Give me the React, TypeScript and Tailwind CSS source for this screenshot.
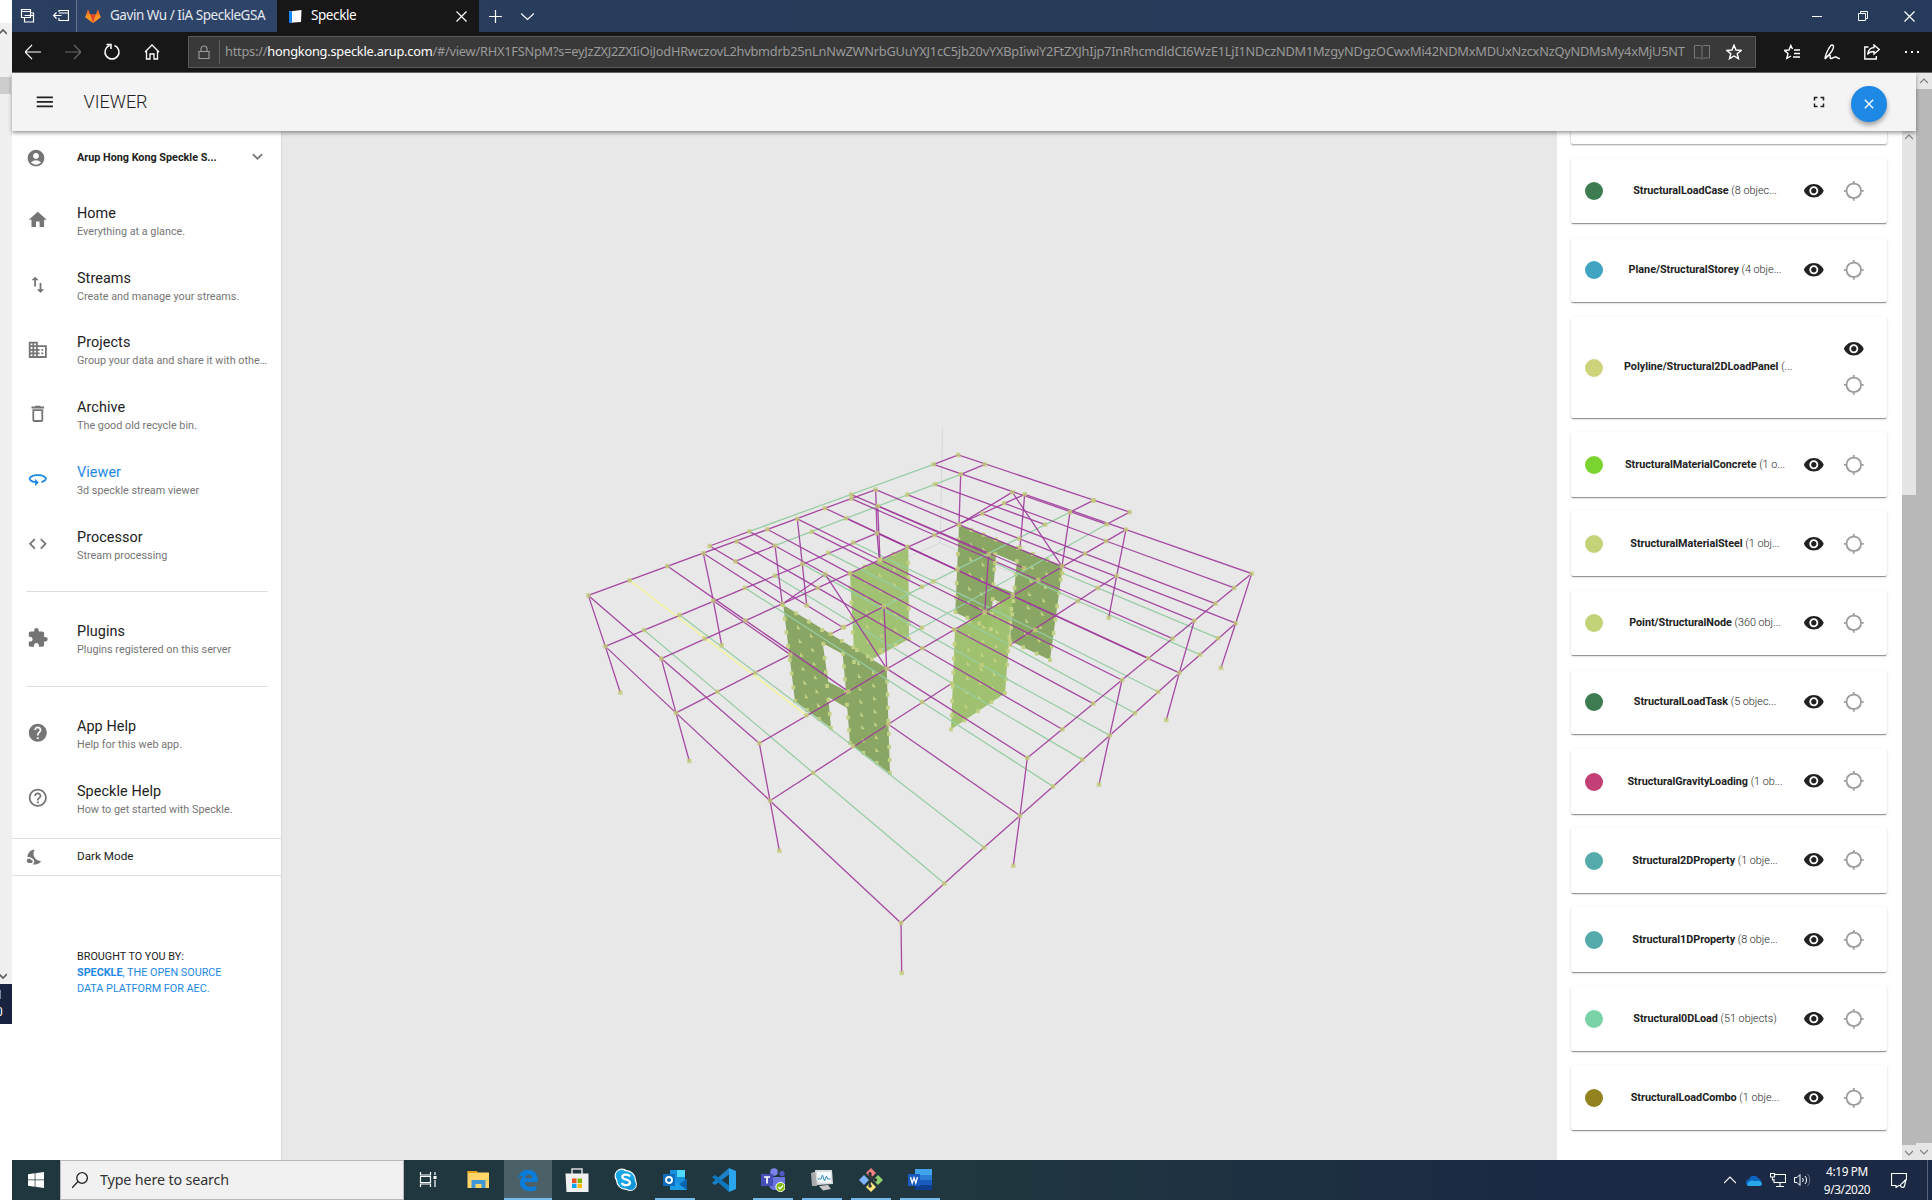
import React from "react";
import {
  Md360,
  MdAccountCircle,
  MdBusiness,
  MdClose,
  MdCode,
  MdDeleteOutline,
  MdExtension,
  MdFullscreen,
  MdGpsNotFixed,
  MdHelp,
  MdHelpOutline,
  MdHome,
  MdKeyboardArrowDown,
  MdMenu,
  MdNightsStay,
  MdSwapVert,
  MdVisibility,
} from "react-icons/md";

type IconType = React.ComponentType<{ className?: string }>;

/* ---------- Browser chrome ---------- */

function Stroke({ d, className, w = 1.2, box = 20 }: { d: string; className: string; w?: number; box?: number }) {
  return (
    <svg viewBox={`0 0 ${box} ${box}`} className={className} fill="none" stroke="currentColor" strokeWidth={w}>
      <path d={d} />
    </svg>
  );
}

function TabBar() {
  return (
    <div className="flex h-8 bg-linear-to-r from-[#2a3f60] via-[#273a58] to-[#263a5b] text-white">
      <div className="flex w-[65px] items-center gap-[17px] border-r border-[#66758e] pl-2">
        <Stroke className="size-4" box={16} d="M1.500 1.500h9v8h-9zM1.500 3.500h9M4.500 9.500v4.500h9v-9h-3M4.500 7.500h9" />
        <Stroke className="size-4" box={16} d="M6 4V2.500h9.500v10H6V10M6 5h9.500M.5 7.500h8M3.500 4.500l-3 3 3 3" />
      </div>
      <div className="flex w-[200px] items-center bg-[#2e4468] pl-[8px]">
        <svg viewBox="0 0 16 16" className="size-4 shrink-0">
          <path d="M8 15L.3 9.300 3 1.200 5.200 6.500h5.600L13 1.200l2.700 8.100z" fill="#fc6d26" />
          <path d="M8 15L5.200 6.500h5.600z" fill="#e24329" />
          <path d="M8 15L.3 9.300l1-2.800h3.900zM8 15l7.700-5.700-1-2.800h-3.900z" fill="#fca326" opacity=".75" />
        </svg>
        <span className="-mt-px ml-[9px] whitespace-nowrap text-[13.500px] tracking-[-0.460px] text-[#e3e7ee]">Gavin Wu / IiA SpeckleGSA</span>
      </div>
      <div className="flex w-[202px] items-center bg-[#171717] pl-3">
        <svg viewBox="0 0 13 13" className="size-[13px]">
          <path d="M0 1.500L12.500 0 12 12 1 12.800z" fill="#fff" />
          <path d="M0 1.500L3 1.100V12.700L0 12.800z" fill="#1387f0" />
        </svg>
        <span className="-mt-px ml-[9px] text-[13.500px] tracking-[-0.420px]">Speckle</span>
        <Stroke className="ml-auto mr-[12px] size-[11px]" box={11} d="M.5.5l10 10M10.500.5l-10 10" />
      </div>
      <div className="flex flex-1 items-center">
        <Stroke className="ml-[10px] size-[13px]" box={13} d="M6.500 0v13M0 6.500h13" />
        <Stroke className="ml-[19px] size-[13px]" box={13} d="M0 3.500l6.500 6 6.500-6" />
        <div className="ml-auto mr-[17px] flex items-center gap-9">
          <Stroke className="size-[10px]" box={10} w={1} d="M0 5.500h10" />
          <Stroke className="size-[10px]" box={10} w={1} d="M.5 2.500h7v7h-7zM2.500 2.500v-2h7v7h-2" />
          <Stroke className="size-[11px]" box={11} d="M.5.5l10 10M10.500.5l-10 10" />
        </div>
      </div>
    </div>
  );
}

const urlTail =
  "/#/view/RHX1FSNpM?s=eyJzZXJ2ZXIiOiJodHRwczovL2hvbmdrb25nLnNwZWNrbGUuYXJ1cC5jb20vYXBpIiwiY2FtZXJhIjp7InRhcmdldCI6WzE1LjI1NDczNDM1MzgyNDgzOCwxMi42NDMxMDUxNzcxNzQyNDMsMy4xMjU5NT";

function AddressBar() {
  return (
    <div className="flex h-[41px] items-center border-b border-[#666] bg-[#171717] text-white">
      <div className="flex w-[176px] items-center pl-[13px]">
        <Stroke className="size-4" box={16} d="M0 8h16M7 1L0 8l7 7" />
        <Stroke className="ml-6 size-4 text-[#6b6b6b]" box={16} d="M0 8h16M9 1l7 7-7 7" />
        <Stroke className="ml-[22px] size-[18px]" box={18} w={1.500} d="M3.500 1.500H8V6M6.500 2.500a7 7 0 1 0 5 0" />
        <Stroke className="ml-[23px] size-4" box={16} w={1.300} d="M1 8l7-7 7 7M2.500 7v8H6v-5h4v5h3.500V7" />
      </div>
      <div className="flex h-8 w-[1568px] items-center border border-[#5a5a5a] bg-[#393939]">
        <Stroke className="ml-[8px] size-[14px] text-[#999]" box={14} d="M2 6.500h10v7H2zM4 6.500V4a3 3 0 0 1 6 0v2.500" />
        <span className="ml-[8px] h-6 w-px bg-[#5c5c5c]" />
        <div className="ml-[5px] w-[1461px] whitespace-nowrap text-[12.800px] tracking-[-0.230px] text-[#9a9a9a]">
          https://<span className="text-white">hongkong.speckle.arup.com</span>
          {urlTail}
        </div>
        <Stroke className="ml-[8px] size-4 shrink-0 text-[#777]" box={16} w={1} d="M8 2.500v11M.5 1.500v12.500h6l1.500 1 1.500-1h6V1.500H9.500L8 2.500 6.500 1.500z" />
        <Stroke className="ml-4 size-4 shrink-0" box={16} w={1.400} d="M8 1.200l2 4.800 5.200.4-4 3.300 1.300 5L8 12l-4.500 2.700 1.300-5-4-3.300L6 6z" />
      </div>
      <div className="ml-[28px] flex items-center gap-[24px]">
        <Stroke className="size-4" box={16} w={1.400} d="M10 6h6M10 9.500h6M9 13h7M8.500 5L6.800 1.500 5 6l-4.500.4 3.500 3-1.200 5L7 12" />
        <Stroke className="size-4" box={16} w={1.400} d="M1 15C1 11 6 1 8 1c3 0 1 5-1.500 8C4 12 2 13 1 15c2-2 4-4 5-3.500s-1 3 1 3 3-2 5-1.500.5 1.500 4 1.500" />
        <Stroke className="size-4" box={16} w={1.400} d="M4.500 3H.8v12h11.500v-3M10 1l5.300 4.500L10 10V7.500c-3 0-5 .5-6.300 3C4 6.500 6 3.800 10 3.500z" />
        <svg viewBox="0 0 16 4" className="h-1 w-4" fill="currentColor">
          <path d="M1 1h2v2H1zM7 1h2v2H7zM13 1h2v2h-2z" />
        </svg>
      </div>
    </div>
  );
}

/* ---------- Application ---------- */

function NavItem({ icon: Icon, title, sub, active }: { icon: IconType; title: string; sub: string; active?: boolean }) {
  return (
    <div className="flex h-[64.800px] items-center pl-[14.800px]">
      <Icon className={active ? "-mt-[3px] size-[21.600px] shrink-0 text-[#1e88e5]" : "-mt-[3px] size-[21.600px] shrink-0 text-[#757575]"} />
      <div className="ml-[28.600px] w-[194px]">
        <div className={active ? "pt-px text-[14.400px] leading-[18px] tracking-[0.080px] text-[#1e88e5]" : "pt-px text-[14.400px] leading-[18px] tracking-[0.080px] text-[#212121]"}>{title}</div>
        <div className="whitespace-nowrap pt-px text-[10.800px] leading-[15px] tracking-[0.010px] text-[#757575]">{sub}</div>
      </div>
    </div>
  );
}

function Sidebar() {
  return (
    <aside className="flex h-full w-[270px] shrink-0 flex-col border-r border-[#dadada] bg-white">
      <div className="flex h-[58px] items-center pb-1 pl-[14px]">
        <MdAccountCircle className="size-5 text-[#757575]" />
        <span className="ml-[31px] text-[10.800px] font-bold text-[#212121]">Arup Hong Kong Speckle S...</span>
        <MdKeyboardArrowDown className="-mt-[3px] ml-auto mr-[13px] size-[21px] text-[#757575]" />
      </div>
      <NavItem icon={MdHome} title="Home" sub="Everything at a glance." />
      <NavItem icon={MdSwapVert} title="Streams" sub="Create and manage your streams." />
      <NavItem icon={MdBusiness} title="Projects" sub="Group your data and share it with othe…" />
      <NavItem icon={MdDeleteOutline} title="Archive" sub="The good old recycle bin." />
      <NavItem icon={Md360} title="Viewer" sub="3d speckle stream viewer" active />
      <NavItem icon={MdCode} title="Processor" sub="Stream processing" />
      <hr className="ml-[14px] mr-[13px] mb-[15px] mt-[13px] border-[#dedede]" />
      <NavItem icon={MdExtension} title="Plugins" sub="Plugins registered on this server" />
      <hr className="ml-[14px] mr-[13px] mb-[15.500px] mt-[14px] border-[#dedede]" />
      <NavItem icon={MdHelp} title="App Help" sub="Help for this web app." />
      <NavItem icon={MdHelpOutline} title="Speckle Help" sub="How to get started with Speckle." />
      <div className="mt-[6px] flex h-[38px] items-center border-y border-[#dedede] pl-[14px]">
        <MdNightsStay className="size-[18px] text-[#757575]" />
        <span className="ml-[33px] text-[11.700px] text-[#212121]">Dark Mode</span>
      </div>
      <p className="ml-[65px] mt-[73px] text-[10.800px] leading-4 text-[#212121]">
        BROUGHT TO YOU BY:
        <br />
        <span className="text-[#1e88e5]">
          <b>SPECKLE</b>, THE OPEN SOURCE
          <br />
          DATA PLATFORM FOR AEC.
        </span>
      </p>
    </aside>
  );
}

/* ---------- 3D model ---------- */

type Pt = [number, number];

const beams = [
  // roof edges
  "588.3,595.400 875.7,489.600", "588.3,595.400 661.3,658.600 759.3,743.200", "661.3,658.600 1024.7,494.300",
  "759.3,743.200 1126,529.600", "1024.7,494.300 1126,529.600 1251.7,573.600 1194.3,620.700 1122,680 1027.3,757.900",
  // roof beams
  "1004,503.200 1106,541 1234.3,587.900", "982.3,513.600 1085,553.600 1215.3,603.600", "875.7,489.600 959,524.600 1062,566.400 1194.3,620.700",
  "851.3,498.600 934.3,535 1038.3,580 1172.7,638.600", "825,508.200 907.3,546.800 1012.7,595.700 1148.3,658.200",
  "797.3,518.900 880.3,560 984.7,611.800 1122,680", "767.3,529.300 850,573.600 954.3,629.300 1093.3,703.600",
  "736.7,541.400 817.7,587.900 922.3,648.300 1062.3,729.300", "703.3,553.200 782.3,604", "886.7,668.600 1027.3,757.900",
  "667.3,566 745.3,620.400 848.3,691.400",
  // lower floor
  "605.3,646.400 877,533.200", "605.3,646.400 676,712.900 770,800.700 901,922.900",
  "901,922.900 944.3,883.600 984,847.500 1020,815.700 1053,786.400 1109.7,735.400 1179.3,672.900 1235.7,623.200",
  "676,712.900 790.3,654.600", "770,800.700 888.3,724.300 952,683.200", "1010,645 1116.7,575.700",
  "713.3,600.700 790.3,654.600", "888.3,724.300 1020,815.700", "877,533.200 1179.3,672.900", "1019,538.600 1235.7,623.200",
  // upper deck
  "933.7,464.300 958.3,455 1129.7,512.100 1106.7,524.300", "960.7,474.300 985,464.300", "933.7,464.300 1106.7,524.300",
  "1070,512.100 1093.3,500.400", "935,484.300 1045,524.600", "907.3,494.600 1019,538.600", "851.3,494.600 1024,568.200",
  "877.7,506 988.7,554.300", "846,518.200 957.3,570", "811.7,531.800 922,586.800", "775,545.700 884,606.400 922,627.700",
  "735.3,561.400 843,627.500", "709.7,546 735.3,561.400 775,545.700 749.3,531.400 709.7,546", "830.7,634 884,606.400",
  // columns
  "588.3,595.400 605.3,646.400 620.3,692.500", "661.3,658.600 676,712.900 689.3,761", "759.3,743.200 770,800.700 779.3,850.700",
  "901,922.900 901.7,972.900", "1027.3,757.900 1020,815.700 1013.3,865.700", "1122,680 1109.7,735.400 1099,784.600",
  "1194.3,620.700 1179.3,672.900 1166.3,720", "1251.7,573.600 1235.7,623.200 1221,667.900", "1126,529.600 1116.7,575.700 1108.7,617.900",
  "703.3,553.200 713.3,600.700 721.7,645.400", "797.3,518.900 802.3,563.900 806.7,605.400", "775,545.700 782.3,604",
  "875.7,489.600 877,533.200 879.3,560", "877.7,506 880,560", "960.7,474.300 959,524.600", "1024.7,494.300 1020,547.500", "1070,512.100 1062,566.400",
  "884,606.400 886.7,668.600", "988.7,554.300 984.7,611.800",
  // braces
  "782.3,604 825.3,574.300 886.7,668.600", "959,524.600 1012.3,492.100 1062,566.400",
];

const purlins = [
  "749.3,531.400 933.7,464.300", "775,545.700 960.7,474.300", "884,606.400 1070,512.100", "880,651 1106.7,524.300",
  "644,630 813.3,772.900 944.3,883.600", "679.7,615 853,746 984,847.500", "745,587.900 922,702 1053,786.400",
  "774.7,575.700 952,683.200 1082.3,759.600", "802.3,563.900 981.7,665 1109.7,735.400", "828.3,552.900 1010,645 1135,713.200",
  "853.3,542.500 1035,630 1158,691.800", "995,563 1077.7,601 1200,654.600", "1062,573 1097.7,587.900 1218,638.200",
];

const extraNodes =
  "629.7,580.400 844,627 717.3,691.800 755.3,672.900 704.7,638.600 806.3,715.400 922,702 922,586.800 933.3,581.400 1218,638.200 1200,654.600 1158,691.800 1135,713.200 1082.3,759.600 1053,786.400 1093.300,500.400 846,518.200";

const toPoints = (s: string): Pt[] => s.split(" ").map((p) => p.split(",").map(Number) as Pt);

function grid(quad: Pt[], cols: number, rows: number, edges: boolean): Pt[] {
  const out: Pt[] = [];
  for (let i = 0; i <= cols; i++)
    for (let j = 0; j <= rows; j++) {
      const onEdge = i === 0 || j === 0 || i === cols || j === rows;
      if (onEdge !== edges) continue;
      const u = i / cols;
      const v = j / rows;
      const at = (k: 0 | 1) =>
        (quad[0][k] * (1 - u) + quad[1][k] * u) * (1 - v) + (quad[3][k] * (1 - u) + quad[2][k] * u) * v;
      out.push([at(0), at(1)]);
    }
  return out;
}

const panels: { quad: Pt[]; cols: number; rows: number }[] = [
  { quad: [[783, 605], [822, 630], [831, 728], [795, 701]], cols: 3, rows: 7 },
  { quad: [[842, 641], [886.7, 668.500], [890, 773], [850, 743]], cols: 3, rows: 8 },
  { quad: [[850, 573], [908, 547.500], [909, 639], [854, 662]], cols: 4, rows: 6 },
  { quad: [[959, 525], [996, 539.500], [991, 629], [955.5, 612]], cols: 3, rows: 6 },
  { quad: [[1018, 548], [1062.5, 566], [1050, 660], [1010, 641]], cols: 3, rows: 7 },
  { quad: [[955, 630], [1012.5, 595], [1005, 693], [951, 729.500]], cols: 4, rows: 7 },
];

function Model() {
  const nodes = [...new Set([...beams, ...purlins].flatMap((s) => s.split(" ")).concat(extraNodes.split(" ")))].flatMap(toPoints);
  return (
    <svg viewBox="282 131 1275 1029" className="size-full" fill="none">
      <path d="M942.500 428L940.300 543L880 569M940.300 543L1024 578" stroke="#d7d7da" />
      <path fill="#a2c273" d="M850 573.500L908.300 547.700 909 639 871.700 659.500 854 650z" />
      <path fill="#8aa664" fillRule="evenodd" d="M959 525L1062.700 566 1050 660 1010 641 1012 607 992.700 599 991 629.500 955.300 612.500zM996 554L1016.700 562.700 1014 593 993.700 585z" />
      <path fill="#9bbf68" fillOpacity=".94" d="M955 630L1012.700 595 1005 693.300 951 729.500z" />
      <path fill="#8aa664" fillRule="evenodd" d="M783.300 605L886.700 668.300 890 773.500 850 743.300 847.300 708.300 828.300 697 831 728 795 701zM822.700 643.300L842.700 654 846 691 828.300 681.700z" />
      {panels.map((p, i) => (
        <g key={i} fill="#c3d184">
          {grid(p.quad, p.cols, p.rows, false).map(([x, y], k) => (
            <path key={k} d={`M${x - 0.5} ${y - 2.500}l3.500 4.500h-3.500z`} />
          ))}
          {grid(p.quad, p.cols, p.rows, true).map(([x, y], k) => (
            <rect key={`e${k}`} x={x - 1.800} y={y - 2} width="3.600" height="4" />
          ))}
        </g>
      ))}
      <g stroke="#97cda5" strokeWidth="1.250">
        {purlins.map((p) => (
          <polyline key={p} points={p} />
        ))}
      </g>
      <path d="M629.700 580.400L806.300 715.400" stroke="#f3f3a0" strokeWidth="1.500" />
      <g stroke="#a03c9c" strokeWidth="1.300" strokeOpacity=".92">
        {beams.map((p) => (
          <polyline key={p} points={p} />
        ))}
      </g>
      <g fill="#c3cc78" fillOpacity=".8">
        {nodes.map(([x, y], i) => (
          <rect key={i} x={x - 2.200} y={y - 2.200} width="4.400" height="4.400" />
        ))}
      </g>
    </svg>
  );
}

/* ---------- Layers panel ---------- */

const layers = [
  { name: "StructuralLoadCase", count: "(8 objec...", dot: "bg-[#3d7b50]" },
  { name: "Plane/StructuralStorey", count: "(4 obje...", dot: "bg-[#41a4c1]" },
  { name: "Polyline/Structural2DLoadPanel", count: "(...", dot: "bg-[#cdd37b]", tall: true },
  { name: "StructuralMaterialConcrete", count: "(1 o...", dot: "bg-[#7bd32f]" },
  { name: "StructuralMaterialSteel", count: "(1 obj...", dot: "bg-[#c4d37a]" },
  { name: "Point/StructuralNode", count: "(360 obj...", dot: "bg-[#c1d377]" },
  { name: "StructuralLoadTask", count: "(5 objec...", dot: "bg-[#3d7b50]" },
  { name: "StructuralGravityLoading", count: "(1 ob...", dot: "bg-[#c24075]" },
  { name: "Structural2DProperty", count: "(1 obje...", dot: "bg-[#55abac]" },
  { name: "Structural1DProperty", count: "(8 obje...", dot: "bg-[#55abac]" },
  { name: "Structural0DLoad", count: "(51 objects)", dot: "bg-[#7ad3a7]" },
  { name: "StructuralLoadCombo", count: "(1 obje...", dot: "bg-[#938220]" },
];

function LayerCard({ name, count, dot, tall }: { name: string; count: string; dot: string; tall?: boolean }) {
  return (
    <div
      className={
        tall
          ? "flex h-[100.800px] shrink-0 items-center rounded-[2px] bg-white shadow-[0_2px_1px_-1px_rgba(0,0,0,.25),0_1px_1px_rgba(0,0,0,.18),0_1px_3px_rgba(0,0,0,.14)]"
          : "flex h-[64.800px] shrink-0 items-center rounded-[2px] bg-white shadow-[0_2px_1px_-1px_rgba(0,0,0,.25),0_1px_1px_rgba(0,0,0,.18),0_1px_3px_rgba(0,0,0,.14)]"
      }
    >
      <span className={`ml-[14px] mt-px size-[18px] shrink-0 rounded-full ${dot}`} />
      <div className={tall ? "ml-[16px] w-[178px] whitespace-nowrap pl-[5px] text-[10.800px] text-[#212121]" : "ml-[17.500px] w-[169px] whitespace-nowrap pt-px text-center text-[10.800px] text-[#212121]"}>
        <b className="tracking-[-0.030px]">{name}</b> <span className="font-light">{count}</span>
      </div>
      <div className={tall ? "-mt-px ml-auto mr-[22.500px] flex flex-col gap-[14.400px]" : "ml-auto mr-[22.500px] flex gap-[18px]"}>
        <MdVisibility className="size-[21.600px] text-[#212121]" />
        <MdGpsNotFixed className="size-[21.600px] text-[#9e9e9e]" />
      </div>
    </div>
  );
}

function Caret({ up }: { up?: boolean }) {
  return <Stroke className="size-2 text-[#7c7c7c]" box={8} w={1.100} d={up ? "M0 6l4-4 4 4" : "M0 2l4 4 4-4"} />;
}

function Viewer() {
  return (
    <div className="flex h-[1087px]">
      <div className="flex w-[1904px] flex-col">
        <header className="z-10 flex h-[58px] shrink-0 items-center bg-[#f4f4f4] shadow-[0_2px_4px_rgba(0,0,0,.4)]">
          <MdMenu className="ml-[22px] size-[21.600px] text-[#212121]" />
          <h1 className="-mt-px ml-[28px] text-[18px] font-light text-[#212121]">VIEWER</h1>
          <MdFullscreen className="ml-auto size-[18px] text-[#212121]" />
          <button className="ml-[23px] mr-[29px] mt-[3px] flex size-9 items-center justify-center rounded-full bg-[#1e88e5] text-white shadow-[0_3px_5px_rgba(0,0,0,.35)]">
            <MdClose className="size-4" />
          </button>
        </header>
        <div className="flex h-[1029px]">
          <Sidebar />
          <main className="w-[1275px] bg-[#e8e8e8]">
            <Model />
          </main>
          <section className="flex w-[345px] flex-col gap-[14.400px] overflow-hidden pl-[14px] pr-[15px]">
            <div className="h-[13px] shrink-0 rounded-b-[2px] bg-white shadow-[0_1px_2px_rgba(0,0,0,.4)]" />
            {layers.map((l) => (
              <LayerCard key={l.name} {...l} />
            ))}
          </section>
          <div className="flex w-[14px] flex-col items-center bg-[#e5e5e5]">
            <div className="pt-[2px]"><Caret up /></div>
            <div className="mt-auto h-[650px] w-full bg-[#b8b8b8]" />
            <div className="flex h-[15px] items-center"><Caret /></div>
          </div>
        </div>
      </div>
      <div className="flex w-4 flex-col items-center bg-[#e6e6e6]">
        <div className="flex h-4 items-center"><Caret up /></div>
        <div className="w-full flex-1 bg-[#b8b8b8]" />
        <div className="flex h-[17px] items-center"><Caret /></div>
      </div>
    </div>
  );
}

/* ---------- Taskbar ---------- */

function AppSlot({ children, open, focus }: { children: React.ReactNode; open?: boolean; focus?: boolean }) {
  return (
    <div className={focus ? "ml-[3px] flex h-10 w-12 flex-col items-center bg-[#4c6068]" : "flex h-10 w-[49px] flex-col items-center"}>
      <svg viewBox="0 0 24 24" className="mt-2 size-6">{children}</svg>
      {focus && <span className="mt-auto h-0.5 w-full bg-[#76b9ed]" />}
      {open && <span className="mt-auto h-0.5 w-10 bg-[#76b9ed]" />}
    </div>
  );
}

function Taskbar() {
  return (
    <footer className="flex h-10 items-center bg-linear-to-r from-[#20373f] from-50% to-[#1b2944] to-80% text-white">
      <div className="flex w-12 justify-center">
        <svg viewBox="0 0 16 16" className="size-4" fill="#fff">
          <path d="M0 2.200L6.700 1.300V7.600H0zM7.400 1.200L16 0V7.600H7.400zM0 8.300h6.700v6.400L0 13.800zM7.400 8.300H16V16l-8.600-1.200z" />
        </svg>
      </div>
      <div className="-mr-px flex h-10 w-[344px] items-center border border-[#b9b9b9] bg-[#f1f1f1] pl-[11px]">
        <Stroke className="size-4 text-[#222]" box={16} w={1.300} d="M0 16l5.700-6.200M15.400 6a5 5 0 1 1-10.600 0 5.300 5.300 0 0 1 10.600 0z" />
        <span className="ml-3 text-[14.300px] tracking-[-0.140px] text-[#333]">Type here to search</span>
      </div>
      <AppSlot>
        <path d="M4.500 4v3h10V4M4.500 19v-3h10v3M4.500 8.500h10v6h-10zM19 4v3M19 12v7" fill="none" stroke="#fff" strokeWidth="1.200" />
        <path d="M17.500 8h3v3h-3z" fill="#fff" />
      </AppSlot>
      <AppSlot>
        <path d="M2.500 3h9L13 4.500H24V20H2.500z" fill="#ffd667" />
        <path d="M2.500 3h9l1 2h-10z" fill="#e2a203" />
        <path d="M6.500 12h14v8h-4v-4h-6v4h-4z" fill="#3f97d8" />
      </AppSlot>
      <AppSlot focus>
        <path d="M2.200 11C2.700 5.500 6.500 1.800 12 1.800c6 0 9.600 4.200 9.600 9.600V14H8.800c.2 6 7.500 6.200 11.600 3.500v4.200C13.500 25.200 4 22.500 4 14.800c0-3.200 1.500-5.500 4.500-7.200-3 .3-5 1.500-6.300 3.400zM9 10.300h7.200C16.200 5 9.600 5.300 9 10.300z" fill="#0a7ddb" />
      </AppSlot>
      <AppSlot>
        <path d="M7 6V1h10v5" fill="none" stroke="#ddd" strokeWidth="1.500" />
        <path d="M.5 5.500h23V24H1.500z" fill="#f1f1f1" />
        <path d="M7 10.500h4.500V15H7z" fill="#f25022" /><path d="M12.500 10.500H17V15h-4.500z" fill="#7fba00" />
        <path d="M7 15.700h4.500V20H7z" fill="#00a4ef" /><path d="M12.500 15.700H17V20h-4.500z" fill="#ffb900" />
      </AppSlot>
      <AppSlot>
        <circle cx="8" cy="8" r="7.500" fill="#fff" /><circle cx="16" cy="16" r="7" fill="#fff" /><circle cx="12" cy="12" r="10" fill="#fff" />
        <circle cx="12" cy="12" r="8.800" fill="#18a6e6" /><circle cx="7.500" cy="7.500" r="5.800" fill="#18a6e6" /><circle cx="16.500" cy="16.500" r="5.500" fill="#0f95d8" />
        <path d="M16 8.500C14.500 5.800 8.300 6 8.300 9s7.700 2 7.700 5.500-6.800 3.500-8.300.5" fill="none" stroke="#fff" strokeWidth="2.300" />
      </AppSlot>
      <AppSlot open>
        <path d="M7 2h15v14H7z" fill="#1490df" /><path d="M14 2h8v7h-8z" fill="#50d9ff" /><path d="M7 11l8 4 9-4v11H7z" fill="#1b9de8" /><path d="M16 16l8-5v11z" fill="#0a63ac" />
        <path d="M0 6h12v12H0z" fill="#0f6cbd" /><circle cx="6" cy="12" r="3" fill="none" stroke="#fff" strokeWidth="1.900" />
      </AppSlot>
      <AppSlot>
        <path d="M17 0l7 3v18l-7 3z" fill="#2aa5ee" /><path d="M17 6.500L3 17l-3-2L17 0z" fill="#1b82c9" /><path d="M17 17.500L3 7 0 9l17 15z" fill="#0d78c0" />
      </AppSlot>
      <AppSlot open>
        <circle cx="13" cy="4" r="3.800" fill="#7b83eb" /><circle cx="21" cy="5.500" r="2.600" fill="#5059c9" />
        <path d="M8 9h16v9a5 5 0 0 1-5 4h-6a6 6 0 0 1-5-5z" fill="#6c74dd" />
        <path d="M0 6h12v12H0z" fill="#464eb8" /><path d="M3 9h6M6 9v6.500" stroke="#fff" strokeWidth="1.700" />
        <circle cx="19.500" cy="19" r="4.600" fill="#7fba00" stroke="#fff" /><path d="M17.300 19l1.700 1.700 3-3.200" fill="none" stroke="#fff" strokeWidth="1.300" />
      </AppSlot>
      <AppSlot open>
        <path d="M1 5l6-2v15H2z" fill="#aaa" /><path d="M5 2h17l1 14-16 1z" fill="#d9dcdc" /><path d="M7 4h14v10.500H8z" fill="#f4fbff" />
        <path d="M8 11h3l1.500-4 2 6 2-5 1 3h3" fill="none" stroke="#3a8dc0" /><path d="M9 18l9-1 3 4-8 1.500z" fill="#c9c9c9" />
      </AppSlot>
      <AppSlot open>
        <path d="M12 0l5 5-5 5-5-5z" fill="#f08080" /><path d="M19 7l5 5-5 5-5-5z" fill="#90d26d" /><path d="M5 7l5 5-5 5-5-5z" fill="#80b3ff" /><path d="M12 14l5 5-5 5-5-5z" fill="#ffe680" />
        <path d="M11 4v15M11 7l5 5" stroke="#2d3436" strokeWidth="1.600" /><circle cx="11" cy="6" r="1.700" fill="#2d3436" /><circle cx="11" cy="18" r="1.700" fill="#2d3436" /><circle cx="16.500" cy="12" r="1.700" fill="#2d3436" />
      </AppSlot>
      <AppSlot open>
        <path d="M7 1h17v6H7z" fill="#41a5ee" /><path d="M7 7h17v5H7z" fill="#2b7cd3" /><path d="M7 12h17v5H7z" fill="#185abd" /><path d="M7 17h17v5H7z" fill="#103f91" />
        <path d="M0 6h12v12H0z" fill="#185abd" /><path d="M2.500 9l1.700 6L6 9.800 7.800 15l1.700-6" fill="none" stroke="#fff" strokeWidth="1.300" />
      </AppSlot>
      <div className="ml-auto flex items-center">
        <Stroke className="size-3" box={12} d="M0 9l6-6 6 6" />
        <svg viewBox="0 0 16 11" className="ml-[10px] h-[11px] w-4">
          <path d="M3 10.500a3 3 0 0 1 0-6 5 5 0 0 1 9-1.500 4 4 0 0 1 1 7.500z" fill="#0a64c2" /><path d="M1 9.500C3 5 7 4.500 9 6.500c4-2 7 .5 7 2.500 0 1.200-1 2-2.500 2H3c-1 0-1.500-.5-2-1.500z" fill="#28a8ea" />
        </svg>
        <Stroke className="ml-2 size-4" box={16} w={1.100} d="M5 2.500h10.500v8H4V7M10 10.500V14M6 14.500h8M.5 1.500h4V5h-4zM2.500 5v3h2" />
        <svg viewBox="0 0 17 14" className="ml-2 h-3.5 w-[17px]" fill="none" stroke="#fff">
          <path d="M.5 4.500H3l3-3v11l-3-3H.5zM8.500 5a3 3 0 0 1 0 4M11 3a6 6 0 0 1 0 8" /><path d="M13.500 1a9 9 0 0 1 0 12" stroke="#66728a" />
        </svg>
        <div className="ml-[12px] w-[48px] whitespace-nowrap text-center text-[11.800px] leading-[18px] tracking-[-0.350px]">
          <div>4:19 PM</div>
          <div>9/3/2020</div>
        </div>
        <Stroke className="ml-5 size-4" box={16} w={1.200} d="M10 13.500l-2 0-3 2v-2H.5v-12h15V8M15 7.500l-4 4a2 2 0 1 0 2.500 2.500z" />
        <span className="ml-5 mr-[4px] h-10 w-px bg-[#56627a]" />
      </div>
    </footer>
  );
}

/* Sliver of a window lying behind the browser. */
function BackgroundWindow() {
  return (
    <div className="flex w-3 shrink-0 flex-col overflow-hidden bg-white text-[#606060]">
      <div className="mt-[23px] h-[54px] bg-[#f0f0f0] pt-[5px]">
        <Stroke className="-ml-px size-2" box={8} w={1.700} d="M0 6l4-4 4 4" />
      </div>
      <div className="h-[17px] bg-[#f0f0f0]"><div className="h-full w-[11px] bg-[#cdcdcd]" /></div>
      <div className="flex h-[890px] items-end bg-[#f0f0f0] pb-1">
        <Stroke className="-ml-px size-2" box={8} w={1.700} d="M0 2l4 4 4-4" />
      </div>
      <div className="h-10 bg-[#17233f] pt-1.5 text-white">
        <div className="h-[9px] w-px bg-[#7d879b]" />
        <div className="-ml-1 mt-[4px] text-[12px] leading-[18px]">0</div>
      </div>
    </div>
  );
}

export default function App() {
  return (
    <div className="flex h-[1200px] w-[1932px] overflow-hidden bg-white font-['Roboto',sans-serif]">
      <BackgroundWindow />
      <div className="flex w-[1920px] flex-col">
        <div className="font-['Noto_Sans','Open_Sans',sans-serif]">
          <TabBar />
          <AddressBar />
        </div>
        <Viewer />
        <div className="font-['Noto_Sans','Open_Sans',sans-serif]">
          <Taskbar />
        </div>
      </div>
    </div>
  );
}
